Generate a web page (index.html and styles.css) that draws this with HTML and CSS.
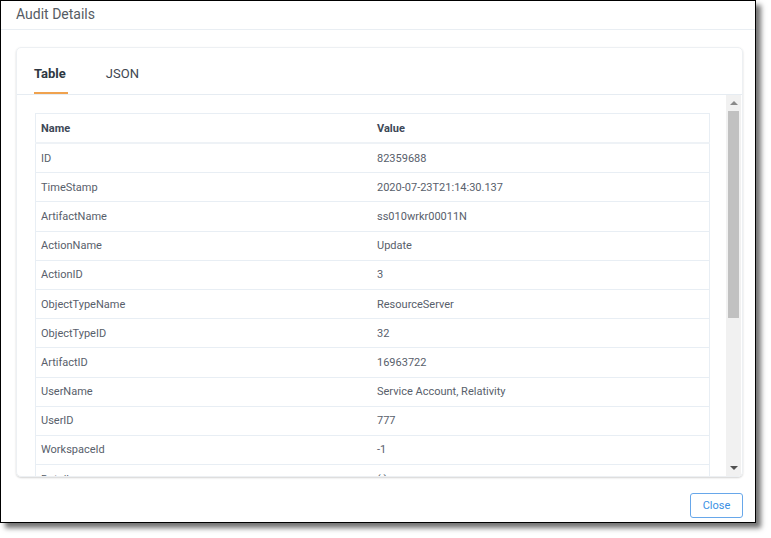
FILE: index.html
```html
<!DOCTYPE html>
<html>
<head>
<meta charset="utf-8">
<link rel="stylesheet" href="styles.css">
</head>
<body>
<div class="dialog">
  <div class="dialog-header">Audit Details</div>
  <div class="dialog-body">
    <div class="card">
      <div class="tabs">
        <div class="tab active">Table</div>
        <div class="tab">JSON</div>
      </div>
      <div class="scroll-wrap">
        <div class="scroll-content">
          <table class="grid">
            <thead>
              <tr><th class="col-name">Name</th><th>Value</th></tr>
            </thead>
            <tbody>
              <tr><td>ID</td><td>82359688</td></tr>
              <tr><td>TimeStamp</td><td>2020-07-23T21:14:30.137</td></tr>
              <tr><td>ArtifactName</td><td>ss010wrkr00011N</td></tr>
              <tr><td>ActionName</td><td>Update</td></tr>
              <tr><td>ActionID</td><td>3</td></tr>
              <tr><td>ObjectTypeName</td><td>ResourceServer</td></tr>
              <tr><td>ObjectTypeID</td><td>32</td></tr>
              <tr><td>ArtifactID</td><td>16963722</td></tr>
              <tr><td>UserName</td><td>Service Account, Relativity</td></tr>
              <tr><td>UserID</td><td>777</td></tr>
              <tr><td>WorkspaceId</td><td>-1</td></tr>
              <tr><td>Details</td><td>{ }</td></tr>
            </tbody>
          </table>
        </div>
        <div class="scrollbar">
          <div class="sb-btn"><span class="arrow-up"></span></div>
          <div class="sb-track"><div class="sb-thumb"></div></div>
          <div class="sb-btn"><span class="arrow-down"></span></div>
        </div>
      </div>
    </div>
    <div class="footer">
      <button class="btn">Close</button>
    </div>
  </div>
</div>
</body>
</html>
```

FILE: styles.css
```css
html, body {
  margin: 0;
  padding: 0;
  background: #ffffff;
}

body {
  font-family: Roboto, "Liberation Sans", sans-serif;
  width: 771px;
  height: 538px;
  overflow: hidden;
}

.dialog {
  width: 756px;
  height: 523px;
  box-sizing: border-box;
  border: 1px solid #000;
  background: #fff;
  box-shadow: 5px 5px 5px rgba(0, 0, 0, 0.55);
  display: flex;
  flex-direction: column;
}

.dialog-header {
  height: 28px;
  line-height: 27px;
  padding-left: 15px;
  font-size: 14px;
  color: #555b63;
  border-bottom: 1px solid #e9eef3;
  flex: none;
}

.dialog-body {
  padding: 17px 12px 0 15px;
  display: flex;
  flex-direction: column;
}

.card {
  height: 430px;
  box-sizing: border-box;
  border: 1px solid #edf0f3;
  border-radius: 5px;
  box-shadow: 0 1px 2px rgba(0, 0, 0, 0.18);
  display: flex;
  flex-direction: column;
  overflow: hidden;
}

.tabs {
  height: 46px;
  flex: none;
  display: flex;
  gap: 38px;
  padding-left: 17px;
  border-bottom: 1px solid #e6ecf2;
}

.tab {
  font-size: 13px;
  color: #3e4650;
  padding: 6px 2px 0 0;
  display: flex;
  align-items: center;
  box-sizing: border-box;
  height: 46px;
  border-bottom: 2px solid transparent;
}

.tab.active {
  font-weight: 700;
  color: #2e3742;
  border-bottom-color: #f0a24e;
}

.scroll-wrap {
  flex: 1;
  display: flex;
  min-height: 0;
}

.scroll-content {
  flex: 1;
  overflow: hidden;
  padding: 18px 16px 0 18px;
}

.grid {
  width: 100%;
  border-collapse: collapse;
  border: 1px solid #e8eef4;
  font-size: 11px;
}

.grid th {
  text-align: left;
  font-weight: 700;
  color: #3d4857;
  height: 28px;
  padding: 0 5px;
  border-bottom: 2px solid #eef2f6;
}

.grid th.col-name {
  width: 326px;
}

.grid td {
  height: 28.2px;
  padding: 0 5px;
  color: #58606b;
  border-bottom: 1px solid #e8eef4;
}

.scrollbar {
  width: 15px;
  margin-right: 1px;
  background: #f1f1f1;
  display: flex;
  flex-direction: column;
  flex: none;
}

.sb-btn {
  height: 16px;
  display: flex;
  align-items: center;
  justify-content: center;
  flex: none;
}

.arrow-up {
  width: 0;
  height: 0;
  border-left: 4px solid transparent;
  border-right: 4px solid transparent;
  border-bottom: 4px solid #8a8a8a;
}

.arrow-down {
  width: 0;
  height: 0;
  border-left: 4px solid transparent;
  border-right: 4px solid transparent;
  border-top: 4px solid #505050;
}

.sb-track {
  flex: 1;
  padding: 0 2px;
}

.sb-thumb {
  height: 207px;
  background: #c1c1c1;
}

.footer {
  display: flex;
  justify-content: flex-end;
  padding-top: 16px;
}

.btn {
  font-family: Roboto, "Liberation Sans", sans-serif;
  width: 53px;
  height: 25px;
  font-size: 11px;
  color: #3b8fe4;
  background: #fff;
  border: 1px solid #67a7ea;
  border-radius: 3px;
  padding: 0;
}
```
